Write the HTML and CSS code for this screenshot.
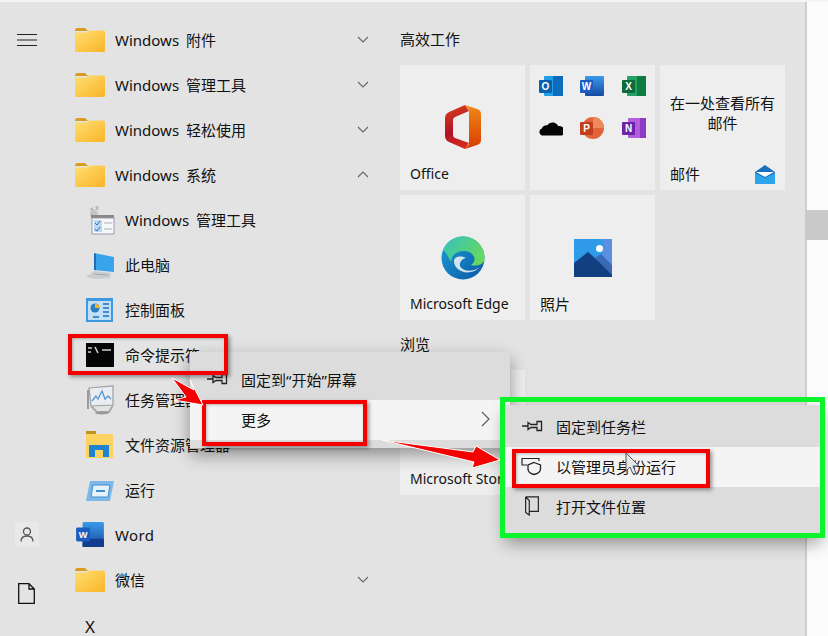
FILE: index.html
```html
<!DOCTYPE html>
<html lang="zh-CN">
<head>
<meta charset="utf-8">
<title>开始菜单</title>
<link rel="stylesheet" href="styles.css">
</head>
<body>
<svg class="defs" width="0" height="0" aria-hidden="true">
  <defs>
    <linearGradient id="fold" x1="0" y1="0" x2="1" y2="1"><stop offset="0" stop-color="#ffdf72"/><stop offset="1" stop-color="#f9b428"/></linearGradient>
    <linearGradient id="off1" x1="0.2" y1="0" x2="0.4" y2="1"><stop offset="0" stop-color="#d9401c"/><stop offset=".6" stop-color="#b01227"/><stop offset="1" stop-color="#d62a1e"/></linearGradient>
    <linearGradient id="off2" x1="0" y1="0" x2="0" y2="1"><stop offset="0" stop-color="#f08a16"/><stop offset="1" stop-color="#d83b01"/></linearGradient>
    <linearGradient id="edge1" x1="0" y1="0" x2="1" y2="1"><stop offset="0" stop-color="#1a9fd8"/><stop offset="1" stop-color="#0c59a4"/></linearGradient>
    <linearGradient id="edge2" x1="0" y1="0" x2="1" y2="0.6"><stop offset="0" stop-color="#35c1c0"/><stop offset="1" stop-color="#66d85f"/></linearGradient>
    <linearGradient id="wd" x1="0" y1="0" x2="0" y2="1"><stop offset="0" stop-color="#3b9ae8"/><stop offset="1" stop-color="#144aa0"/></linearGradient>
    <symbol id="folder" viewBox="0 0 30 25">
      <path d="M0 3.500Q0 1 2.500 1H10l3 3H0Z" fill="#d99c1c"/>
      <path d="M0 5.500L12 5.500L14 3.500H28.500Q30 3.500 30 5V23.500Q30 25 28.500 25H1.500Q0 25 0 23.500Z" fill="url(#fold)"/>
    </symbol>
    <symbol id="pin" viewBox="0 0 22 14">
      <path d="M1 7H7M7 3.500L10 5.500H16V2.500H20.500V11.500H16V8.500H10L7 10.500Z" fill="none" stroke="#222" stroke-width="1.300"/>
    </symbol>
    <symbol id="word" viewBox="0 0 30 27">
      <rect x="7" y="0" width="23" height="27" rx="1.500" fill="url(#wd)"/>
      <rect x="7" y="18" width="23" height="9" fill="#123c8c"/>
      <rect x="0" y="6" width="15" height="15" rx="1.500" fill="#1a5cc0"/>
      <text x="7.500" y="17.500" class="iconletter">W</text>
    </symbol>
  </defs>
</svg>

<div class="page">
  <nav class="rail">
    <div class="rail-btn">
      <svg width="20" height="12" viewBox="0 0 20 12"><path d="M0 .5H20M0 6H20M0 11.500H20" stroke="#222" stroke-width="1"/></svg>
    </div>
    <div class="rail-bottom">
      <div class="rail-btn user">
        <svg width="14" height="15" viewBox="0 0 14 15"><circle cx="7" cy="4.500" r="3.500" fill="none" stroke="#555" stroke-width="1.300"/><path d="M1 14.500C1 10.500 4 9 7 9S13 10.500 13 14.500" fill="none" stroke="#555" stroke-width="1.300"/></svg>
      </div>
      <div class="rail-btn doc">
        <svg width="17" height="21" viewBox="0 0 17 21"><path d="M.7.7H11L16.300 6V20.300H.7ZM11 .7V6H16.300" fill="none" stroke="#111" stroke-width="1.300"/></svg>
      </div>
    </div>
  </nav>

  <section class="list">
    <div class="row"><svg class="ico-folder"><use href="#folder"/></svg><span class="label">Windows 附件</span><svg class="chev" viewBox="0 0 12 7"><path d="M1 1L6 6L11 1" fill="none" stroke="#666" stroke-width="1.100"/></svg></div>
    <div class="row"><svg class="ico-folder"><use href="#folder"/></svg><span class="label">Windows 管理工具</span><svg class="chev" viewBox="0 0 12 7"><path d="M1 1L6 6L11 1" fill="none" stroke="#666" stroke-width="1.100"/></svg></div>
    <div class="row"><svg class="ico-folder"><use href="#folder"/></svg><span class="label">Windows 轻松使用</span><svg class="chev" viewBox="0 0 12 7"><path d="M1 1L6 6L11 1" fill="none" stroke="#666" stroke-width="1.100"/></svg></div>
    <div class="row"><svg class="ico-folder"><use href="#folder"/></svg><span class="label">Windows 系统</span><svg class="chev" viewBox="0 0 12 7"><path d="M1 6L6 1L11 6" fill="none" stroke="#666" stroke-width="1.100"/></svg></div>

    <div class="row sub">
      <svg class="ico-sub" viewBox="0 0 30 30"><path d="M6 3l2 3M12 1v4" stroke="#bbb" stroke-width="3"/><circle cx="9" cy="9" r="4" fill="#c4c4c4"/><rect x="6" y="10" width="23" height="3" fill="#888"/><rect x="7" y="13" width="22" height="16" fill="#f6f8fb" stroke="#99a" stroke-width="1"/><rect x="9" y="15" width="8" height="12" fill="#bcd7f2"/><path d="M10 18l2 2 3-4M10 24l2 2 3-4" fill="none" stroke="#2f6fb5" stroke-width="1"/><path d="M19 18h8M19 24h8" stroke="#c5c9d0" stroke-width="1.500"/></svg>
      <span class="label">Windows 管理工具</span>
    </div>
    <div class="row sub">
      <svg class="ico-sub" viewBox="0 0 30 30"><path d="M9 3L29 7V22L9 20Z" fill="#38a4ee"/><path d="M9 3L11 4V20L9 20Z" fill="#1c6fb5"/><path d="M1 27L9 21L26 23L25 28L10 29Z" fill="#c9cdd0"/><path d="M9 24L23 25" stroke="#a2a7aa"/></svg>
      <span class="label">此电脑</span>
    </div>
    <div class="row sub">
      <svg class="ico-sub" viewBox="0 0 30 30"><rect x="1" y="3" width="27" height="24" fill="#3e9ae0"/><rect x="3" y="6" width="23" height="19" fill="#bfe0f7"/><circle cx="10" cy="13" r="4.500" fill="#2d7dc4"/><path d="M10 13V8.500A4.500 4.500 0 0 1 14.500 13Z" fill="#f0b429"/><path d="M8 22h6M18 9h6M18 13h6M18 17h6M18 21h6" stroke="#1f6fb8" stroke-width="1.600"/></svg>
      <span class="label">控制面板</span>
    </div>
    <div class="row sub">
      <svg class="ico-sub" viewBox="0 0 30 30"><rect x="1" y="3" width="28" height="24" fill="#050505"/><path d="M3 8h4M3 12h3M10 7l3 6M17 10h9" stroke="#d0d0d0" stroke-width="1.600"/></svg>
      <span class="label">命令提示符</span>
    </div>
    <div class="row sub">
      <svg class="ico-sub" viewBox="0 0 30 30"><path d="M4 3L28 1V20L6 21Z" fill="#e9edf2" stroke="#9aa0a6" stroke-width="1.200"/><path d="M7 16L11 11L13 14L17 6L20 14L23 11L26 14" fill="none" stroke="#5a93cf" stroke-width="1.300"/><path d="M3 5V24" stroke="#9b9b9b" stroke-width="2"/><path d="M6 21L12 27H24L28 20" fill="none" stroke="#aaa" stroke-width="2"/><ellipse cx="17" cy="28" rx="7" ry="1.500" fill="#999"/></svg>
      <span class="label">任务管理器</span>
    </div>
    <div class="row sub">
      <svg class="ico-sub" viewBox="0 0 30 30"><path d="M1 1H11V4H1Z" fill="#c2921a"/><path d="M1 4H28V28H1Z" fill="#fcd260"/><rect x="4" y="15" width="20" height="12" fill="#1f84cf"/><rect x="10" y="20" width="8" height="7" fill="#fcd260"/></svg>
      <span class="label">文件资源管理器</span>
    </div>
    <div class="row sub">
      <svg class="ico-sub" viewBox="0 0 30 30"><path d="M5 6H29L25 26H1Z" fill="#7db8e8"/><path d="M8 10H25L23 22H6Z" fill="#e6f2fb" stroke="#3f8ccc" stroke-width="1"/><path d="M11 16H20" stroke="#3f8ccc" stroke-width="2"/></svg>
      <span class="label">运行</span>
    </div>
    <div class="row"><svg class="ico-folder"><use href="#word"/></svg><span class="label word">Word</span></div>
    <div class="row"><svg class="ico-folder"><use href="#folder"/></svg><span class="label">微信</span><svg class="chev" viewBox="0 0 12 7"><path d="M1 1L6 6L11 1" fill="none" stroke="#666" stroke-width="1.100"/></svg></div>
    <div class="row letter"><span class="label">X</span></div>
  </section>

  <section class="tiles">
    <h2 class="group-title">高效工作</h2>
    <div class="grid">
      <div class="tile">
        <svg class="tile-ico office" viewBox="0 0 36 44"><path d="M20 0L24 6L10 12Q8 13 8 15V30Q8 32 10 33L24 38L20 44L4 37Q0 35 0 31V13Q0 9 4 7Z" fill="url(#off1)"/><path d="M20 0L32 4Q36 5 36 9V35Q36 39 32 40L20 44L24 39V5Z" fill="url(#off2)"/></svg>
        <span class="tile-label latin">Office</span>
      </div>
      <div class="tile apps">
        <svg class="app" viewBox="0 0 24 22"><rect x="5" y="1" width="19" height="20" rx="1" fill="#1f9fe6"/><rect x="14" y="1" width="10" height="20" fill="#0f6cbd"/><rect x="0" y="5" width="13" height="13" rx="1" fill="#0a5fb0"/><text x="6.500" y="15" class="iconletter">O</text></svg>
        <svg class="app" viewBox="0 0 24 22"><rect x="5" y="1" width="19" height="20" rx="1" fill="url(#wd)"/><rect x="0" y="5" width="13" height="13" rx="1" fill="#1a5cc0"/><text x="6.500" y="15" class="iconletter">W</text></svg>
        <svg class="app" viewBox="0 0 24 22"><rect x="5" y="1" width="19" height="20" rx="1" fill="#21a366"/><rect x="15" y="1" width="9" height="20" fill="#107c41"/><rect x="0" y="5" width="13" height="13" rx="1" fill="#0f6b3a"/><text x="6.500" y="15" class="iconletter">X</text></svg>
        <svg class="app" viewBox="0 0 26 18"><path d="M3 17A4 4 0 0 1 3 9.500A6 6 0 0 1 9 6A7 7 0 0 1 21 7A5.500 5.500 0 0 1 25 17Z" fill="#050505"/></svg>
        <svg class="app" viewBox="0 0 24 22"><circle cx="13" cy="11" r="11" fill="#e2633a"/><path d="M13 0A11 11 0 0 1 24 11H13Z" fill="#ed8a5b"/><rect x="0" y="5" width="13" height="13" rx="1" fill="#c43e1c"/><text x="6.500" y="15" class="iconletter">P</text></svg>
        <svg class="app" viewBox="0 0 24 22"><rect x="6" y="1" width="18" height="20" rx="1" fill="#b35ce0"/><rect x="18" y="1" width="6" height="20" fill="#8a3cc2"/><rect x="0" y="5" width="13" height="13" rx="1" fill="#6b24a8"/><text x="6.500" y="15" class="iconletter">N</text></svg>
      </div>
      <div class="tile mail">
        <p class="mail-text">在一处查看所有<br>邮件</p>
        <div class="mail-foot">
          <span class="tile-label">邮件</span>
          <svg class="mail-ico" viewBox="0 0 20 19"><path d="M0 7L10 0L20 7V19H0Z" fill="#1b6fc0"/><path d="M1 7H19L10 12Z" fill="#fff"/><path d="M0 8L10 13L20 8V19H0Z" fill="#2ea4ea"/></svg>
        </div>
      </div>
      <div class="tile">
        <svg class="tile-ico edge" viewBox="0 0 44 44"><circle cx="22" cy="22" r="21.500" fill="url(#edge1)"/><path d="M2 14A21.500 21.500 0 0 1 43.500 22C43.500 29 36 30.500 30 29C37 25 33 15 23 15C14 15 10 21 10 26C7 20 5 17 2 14Z" fill="url(#edge2)"/><path d="M13 25C13 33 22 38 30 36C36 35 39 31 41 28C37 36 22 37 19 30C18 26 22 22 25 22C19 19 13 21 13 25Z" fill="#e9eef0" opacity=".9"/></svg>
        <span class="tile-label latin">Microsoft Edge</span>
      </div>
      <div class="tile">
        <svg class="tile-ico photos" viewBox="0 0 38 38"><rect width="38" height="38" fill="#2f9be8"/><path d="M30 0H38V38H26Z" fill="#5b8fe0"/><circle cx="25.500" cy="9.500" r="3.500" fill="#fff"/><path d="M0 24L14 13L38 34V38H0Z" fill="#123f80"/><path d="M21 19L27 15L38 26V36Z" fill="#3a69b5"/></svg>
        <span class="tile-label">照片</span>
      </div>
    </div>
    <h2 class="group-title">浏览</h2>
    <div class="grid">
      <div class="tile store"><span class="tile-label latin">Microsoft Store</span></div>
    </div>
  </section>

  <aside class="scroll"><div class="thumb"></div></aside>

  <div class="menu first-menu">
    <div class="menu-item"><svg class="menu-ico" viewBox="0 0 22 14"><use href="#pin"/></svg><span>固定到“开始”屏幕</span></div>
    <div class="menu-item active"><span class="menu-spacer"></span><span>更多</span><svg class="menu-arrow" viewBox="0 0 9 16"><path d="M1 1L8 8L1 15" fill="none" stroke="#555" stroke-width="1.100"/></svg></div>
  </div>

  <div class="menu second-menu">
    <div class="menu-item"><svg class="menu-ico" viewBox="0 0 22 14"><use href="#pin"/></svg><span>固定到任务栏</span></div>
    <div class="menu-item active"><svg class="menu-ico" viewBox="0 0 22 18"><path d="M1 8V1.500H18V4M1 1.500V8H6" fill="none" stroke="#222" stroke-width="1.200"/><path d="M13 5.500L19.500 8V12C19.500 15 16 16.800 13 17.500C10 16.800 7 15 7 12V8Z" fill="none" stroke="#222" stroke-width="1.300"/></svg><span>以管理员身份运行</span></div>
    <div class="menu-item"><svg class="menu-ico" viewBox="0 0 22 22"><path d="M4 1H18V17H8M4 1V18L8 21V5L4 1M8 17V21" fill="none" stroke="#222" stroke-width="1.300"/></svg><span>打开文件位置</span></div>
  </div>

  <div class="note red-cmd"></div>
  <div class="note red-more"></div>
  <div class="note red-admin"></div>
  <div class="note green-box"></div>

  <svg class="overlay" viewBox="0 0 828 636" aria-hidden="true">
    <path class="arrow" d="M172 378L194 390L190 380L203 405L174 400L186 397Z"/>
    <path class="arrow" d="M382 440L473 452L476 446L500 460L472 468L474 462Z"/>
    <path class="cursor" d="M626 453V471L630 467L633 474L636 473L633 466L639 466Z"/>
  </svg>
</div>
</body>
</html>
```
FILE: styles.css
```css
* { box-sizing: border-box; }
html, body { margin: 0; padding: 0; }
body {
  width: 828px;
  height: 636px;
  overflow: hidden;
  background: #e3e3e3;
  color: #111;
  font-family: "Noto Sans", "Noto Sans CJK SC", sans-serif;
  font-size: 15px;
}
.defs { position: absolute; }
.iconletter {
  font-family: "Liberation Sans", sans-serif;
  font-size: 10px;
  font-weight: 700;
  fill: #fff;
  text-anchor: middle;
}

.page {
  position: relative;
  display: flex;
  width: 828px;
  height: 636px;
  overflow: hidden;
  background: #e3e3e3;
  border-top: 2px solid #f4f4f4;
}

.rail {
  width: 70px;
  flex: none;
  display: flex;
  flex-direction: column;
  padding-top: 15px;
}
.rail-btn {
  width: 53px;
  height: 45px;
  display: flex;
  align-items: center;
  justify-content: center;
}
.rail-bottom {
  margin-top: auto;
  padding-bottom: 20px;
  display: flex;
  flex-direction: column;
  gap: 14px;
}
.user svg {
  box-sizing: content-box;
  padding: 5px;
  background: #e9e9e9;
}

.list {
  width: 330px;
  flex: none;
  padding-top: 15px;
}
.row {
  height: 45px;
  display: flex;
  align-items: center;
  padding-left: 5px;
  padding-right: 31px;
}
.row.sub { padding-left: 15px; }
.row.letter { padding-left: 15px; height: 48px; font-size: 17px; line-height: 17px; }
.ico-folder { width: 30px; height: 25px; flex: none; margin-right: 10px; }
.ico-sub { width: 30px; height: 30px; flex: none; margin-right: 10px; }
.label { white-space: nowrap; word-spacing: 3px; }
.label.word { letter-spacing: .4px; }
.chev { width: 12px; height: 7px; margin-left: auto; flex: none; }

.tiles {
  width: 405px;
  flex: none;
  padding-top: 13px;
}
.group-title {
  margin: 0;
  height: 50px;
  line-height: 48px;
  font-size: 15px;
  font-weight: 400;
}
.grid {
  display: grid;
  grid-template-columns: repeat(3, 125px);
  grid-auto-rows: 125px;
  gap: 5px;
}
.tile {
  position: relative;
  background: #eeeeee;
  display: flex;
  flex-direction: column;
  align-items: center;
  justify-content: flex-end;
  padding: 0 10px 6px;
}
.tile-label { align-self: flex-start; line-height: 20px; white-space: nowrap; }
.tile-label.latin { font-size: 14px; }
.tile-ico { margin-bottom: auto; flex: none; }
.office { width: 36px; height: 44px; margin-top: 40px; }
.edge { width: 44px; height: 44px; margin-top: 41px; }
.photos { width: 38px; height: 38px; margin-top: 44px; }

.tile.apps {
  display: grid;
  grid-template-columns: repeat(3, 1fr);
  grid-template-rows: 42px 42px;
  align-content: start;
  justify-items: center;
  align-items: center;
  padding: 0;
}
.app { width: 24px; height: 22px; }

.tile.mail { justify-content: space-between; padding-top: 28px; }
.mail-text { margin: 0; text-align: center; line-height: 20px; white-space: nowrap; }
.mail-foot { display: flex; width: 100%; align-items: center; justify-content: space-between; }
.mail-ico { width: 20px; height: 19px; }

.scroll {
  flex: 1;
  background: #fbfbfb;
  border-left: 2px solid #cfcfcf;
  padding-top: 208px;
}
.thumb { height: 30px; background: #c9c9c9; margin-left: -2px; }

.menu {
  position: absolute;
  background: #dcdcdc;
  padding: 8px 0;
  box-shadow: 0 7px 16px rgba(0, 0, 0, .38);
  z-index: 2;
}
.first-menu { left: 190px; top: 350px; width: 320px; }
.second-menu { left: 505px; top: 403px; width: 316px; padding-top: 2px; border-bottom: 1px solid #c9d3e6; }
.menu-item {
  height: 40px;
  display: flex;
  align-items: center;
  padding: 0 20px 2px 16px;
  white-space: nowrap;
}
.menu-item.active { background: #f4f4f4; }
.menu-ico { width: 22px; height: 20px; margin-right: 13px; flex: none; }
.menu-spacer { width: 35px; flex: none; }
.menu-arrow { width: 9px; height: 16px; margin-left: auto; }

.note { position: absolute; z-index: 3; }
.red-cmd, .red-more, .red-admin {
  border: 4px solid #f40000;
  box-shadow: 2px 2px 4px rgba(0, 0, 0, .4), inset 1px 1px 3px rgba(0, 0, 0, .25);
}
.red-cmd { left: 68px; top: 332px; width: 160px; height: 41px; }
.red-more { left: 202px; top: 398px; width: 165px; height: 46px; }
.red-admin { left: 512px; top: 447px; width: 198px; height: 39px; }
.green-box {
  left: 500px;
  top: 395px;
  width: 325px;
  height: 141px;
  border: 5px solid #0cf52c;
}

.overlay {
  position: absolute;
  left: 0;
  top: -2px;
  width: 828px;
  height: 636px;
  z-index: 4;
}
.arrow { fill: #f50000; stroke: #ffffff; stroke-width: 1; }
.cursor { fill: #e8e8e8; stroke: #555; stroke-width: 1; }
```
